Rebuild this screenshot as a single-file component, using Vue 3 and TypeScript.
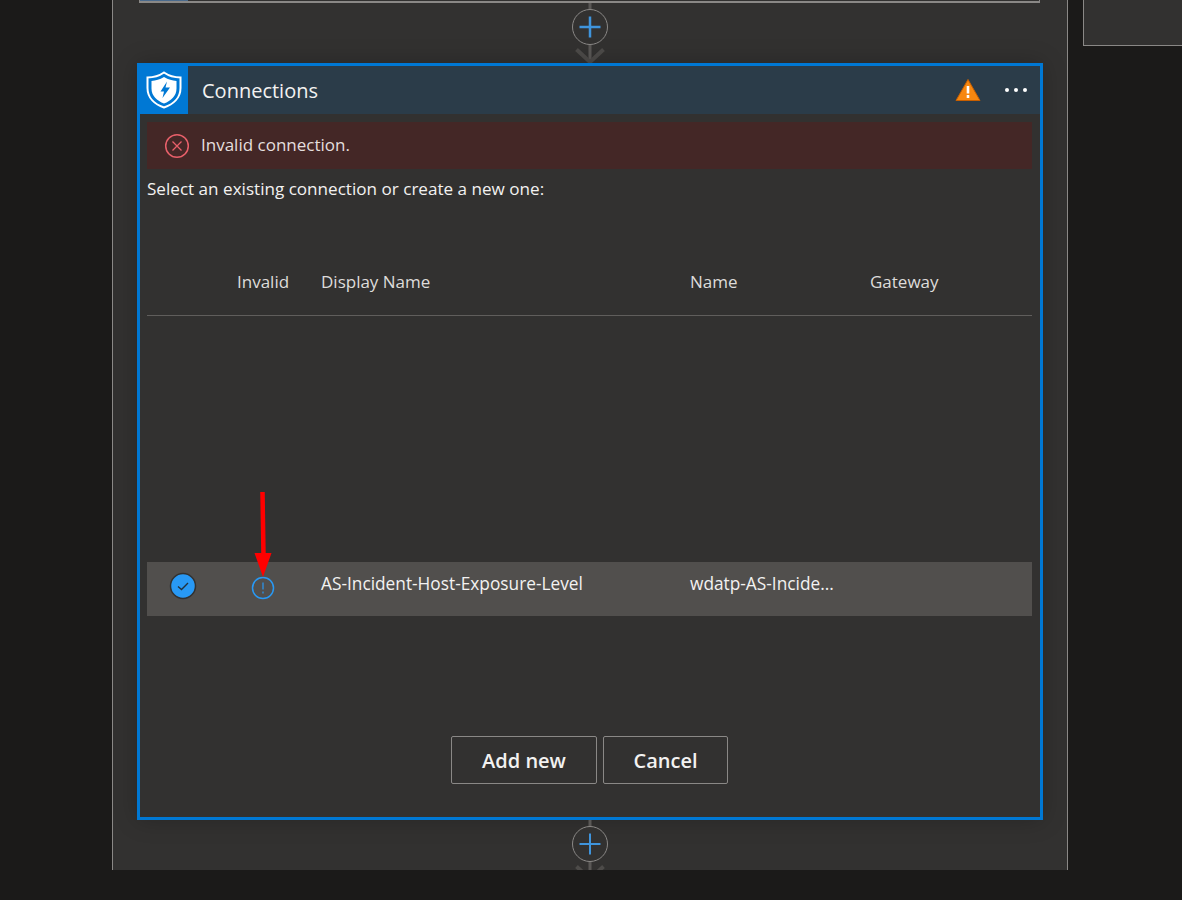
<script setup lang="ts">
interface Column { label: string }
const columns: Column[] = [
  { label: 'Invalid' },
  { label: 'Display Name' },
  { label: 'Name' },
  { label: 'Gateway' },
]
</script>

<template>
  <div class="page">
    <main class="panel">
      <div class="prev-card"><span class="prev-tab"></span></div>
      <div class="connector top">
        <svg class="conn-svg" width="40" height="60" viewBox="0 0 40 60">
          <path d="M20 0V60" stroke="#5a5856" stroke-width="3" fill="none" />
          <path d="M6.500 46.500L20 59L33.500 46.500" stroke="#4d4b49" stroke-width="4" fill="none" />
          <circle cx="20" cy="24" r="17.500" fill="#323130" stroke="#8a8886" stroke-width="1" />
          <path d="M9.500 24H30.500M20 13.500V34.500" stroke="#3f94dc" stroke-width="2.500" fill="none" />
        </svg>
      </div>

      <section class="card">
        <header class="card-head">
          <div class="logo">
            <svg width="36" height="38" viewBox="0 0 36 38">
              <path d="M18 1.500C23 5 28 6.500 34.500 6.500V17C34.500 27 27 33.500 18 36.500C9 33.500 1.500 27 1.500 17V6.500C8 6.500 13 5 18 1.500Z" fill="none" stroke="#fff" stroke-width="2" />
              <path d="M18 6C22.500 8.500 26 9.700 30.500 10V17.500C30.500 25 25 29.800 18 32.500C11 29.800 5.500 25 5.500 17.500V10C10 9.700 13.500 8.500 18 6Z" fill="#fff" />
              <path d="M21 10.500L14.500 20.500H18L16.500 27L24 16.500H19.500L21 10.500Z" fill="#0078d4" />
            </svg>
          </div>
          <h1 class="title">Connections</h1>
          <svg class="warn" width="26" height="24" viewBox="0 0 26 24">
            <path d="M13 1.500L25 22.500H1Z" fill="#f7870f" stroke="#c85f00" stroke-width="1" stroke-linejoin="round" />
            <path d="M11.700 8H14.300V15.500H11.700ZM11.700 17H14.300V20H11.700Z" fill="#fff" />
          </svg>
          <div class="dots"><i></i><i></i><i></i></div>
        </header>

        <div class="body">
          <div class="error">
            <svg width="26" height="26" viewBox="0 0 26 26">
              <circle cx="13" cy="13" r="11.300" fill="none" stroke="#e8606a" stroke-width="1.500" />
              <path d="M8.500 8.500L17.500 17.500M17.500 8.500L8.500 17.500" stroke="#e8606a" stroke-width="1.300" />
            </svg>
            <span>Invalid connection.</span>
          </div>
          <p class="hint">Select an existing connection or create a new one:</p>

          <div class="table-head grid">
            <span></span>
            <span v-for="c in columns" :key="c.label">{{ c.label }}</span>
          </div>

          <div class="rows">
            <div class="row grid">
              <span class="cell-check">
                <svg width="28" height="28" viewBox="0 0 28 28">
                  <circle cx="14" cy="14" r="12.500" fill="#2899f5" stroke="#323130" stroke-width="1.500" />
                  <path d="M9 14.500L12.500 17.500L19 11" fill="none" stroke="#22303c" stroke-width="1.400" />
                </svg>
              </span>
              <span class="cell-invalid">
                <svg width="24" height="24" viewBox="0 0 24 24">
                  <circle cx="12" cy="12" r="10.500" fill="none" stroke="#2899f5" stroke-width="1.500" />
                  <path d="M12 6.500V13.500M12 15.500V17.500" stroke="#2899f5" stroke-width="1.200" fill="none" />
                </svg>
              </span>
              <span>AS-Incident-Host-Exposure-Level</span>
              <span>wdatp-AS-Incide...</span>
              <span></span>
            </div>
            <svg class="annot" width="20" height="86" viewBox="0 0 20 86">
              <path d="M9.500 0L10.500 64" stroke="#f00" stroke-width="4.500" fill="none" />
              <path d="M1.500 61H18.500L10 85Z" fill="#f00" />
            </svg>
          </div>

          <div class="actions">
            <button class="btn add">Add new</button>
            <button class="btn cancel">Cancel</button>
          </div>
        </div>
      </section>

      <div class="connector bottom">
        <svg class="conn-svg" width="40" height="60" viewBox="0 0 40 60">
          <path d="M20 0V60" stroke="#5a5856" stroke-width="3" fill="none" />
          <path d="M6.500 46.500L20 59L33.500 46.500" stroke="#4d4b49" stroke-width="4" fill="none" />
          <circle cx="20" cy="24" r="17.500" fill="#323130" stroke="#8a8886" stroke-width="1" />
          <path d="M9.500 24H30.500M20 13.500V34.500" stroke="#3f94dc" stroke-width="2" fill="none" />
        </svg>
      </div>
    </main>
    <aside class="side-box"></aside>
  </div>
</template>

<style>
html, body { background: #1b1a19; }
</style>

<style scoped>
.page {
  display: flex;
  align-items: flex-start;
  height: 900px;
  overflow: hidden;
  padding-left: 112px;
  background: #1b1a19;
  font-family: "Open Sans", "Noto Sans", "Liberation Sans", sans-serif;
  color: #f3f2f1;
}
.panel {
  width: 956px;
  height: 870px;
  box-sizing: border-box;
  flex: none;
  background: #323130;
  border-left: 1px solid #8a8886;
  border-right: 1px solid #8a8886;
  display: flex;
  flex-direction: column;
  align-items: center;
  overflow: hidden;
}
.prev-card {
  width: 901px;
  height: 3px;
  flex: none;
  box-sizing: border-box;
  margin-right: 1px;
  border: 1px solid #8a8886;
  border-top: 0;
  border-bottom-width: 2px;
  position: relative;
}
.prev-tab {
  display: block;
  width: 48px;
  height: 1px;
  background: #4a6a8c;
}
.connector {
  width: 40px;
  flex: none;
  overflow: hidden;
}
.connector.top { height: 60px; }
.connector.bottom { height: 50px; }
.conn-svg { display: block; }
.card {
  width: 906px;
  height: 757px;
  flex: none;
  box-sizing: border-box;
  border: 3px solid #0078d4;
  background: #323130;
  box-shadow: 0 0 22px rgba(0, 0, 0, 0.22);
  display: flex;
  flex-direction: column;
}
.card-head {
  height: 48px;
  flex: none;
  background: #2b3c49;
  display: flex;
  align-items: center;
}
.logo {
  width: 48px;
  height: 48px;
  background: #0078d4;
  display: flex;
  align-items: center;
  justify-content: center;
}
.title {
  flex: 1;
  margin: 0 0 0 14px;
  font-size: 20px;
  font-weight: 400;
  color: #f3f2f1;
}
.warn { margin-right: 24px; }
.dots {
  display: flex;
  gap: 5px;
  margin-right: 13px;
}
.dots i {
  width: 4px;
  height: 4px;
  border-radius: 50%;
  background: #fff;
}
.body {
  flex: 1;
  display: flex;
  flex-direction: column;
  padding: 8px 8px 0 7px;
}
.error {
  height: 47px;
  flex: none;
  background: #442726;
  display: flex;
  align-items: center;
  gap: 11px;
  padding-left: 17px;
  font-size: 17px;
  color: #e4dfde;
}
.error span { position: relative; top: -1px; }
.hint {
  margin: 9px 0 0;
  font-size: 17.100px;
  line-height: 22px;
  color: #f3f2f1;
}
.grid {
  display: grid;
  grid-template-columns: 90px 84px 369px 180px 1fr;
  align-items: center;
  font-size: 17px;
}
.table-head {
  margin-top: 49px;
  height: 67px;
  box-sizing: border-box;
  border-bottom: 1px solid #605e5c;
  color: #dedcda;
}
.table-head span { position: relative; top: -1px; }
.rows {
  position: relative;
  height: 300px;
  flex: none;
}
.row {
  position: absolute;
  left: 0;
  right: 0;
  top: 246px;
  height: 54px;
  background: #514f4d;
  color: #f3f2f1;
  font-size: 17.300px;
}
.row > span:nth-child(n + 3) { position: relative; top: -6px; }
.cell-check { display: flex; justify-content: center; padding-right: 18px; position: relative; top: -3px; }
.cell-invalid { display: flex; padding-left: 14px; position: relative; top: -1px; }
.annot {
  position: absolute;
  left: 106px;
  top: 176px;
}
.actions {
  margin-top: 120px;
  display: flex;
  gap: 6px;
  justify-content: center;
  margin-right: 120px;
  padding-left: 120px;
}
.btn {
  height: 48px;
  box-sizing: border-box;
  background: transparent;
  border: 1px solid #8a8886;
  border-radius: 2px;
  color: #f3f2f1;
  font: 600 20px "Open Sans", "Noto Sans", sans-serif;
  padding: 0;
}
.add { width: 146px; }
.cancel { width: 125px; }
.side-box {
  width: 99px;
  height: 46px;
  flex: none;
  margin-left: 15px;
  box-sizing: border-box;
  background: #323130;
  border-left: 1px solid #8a8886;
  border-bottom: 1px solid #8a8886;
}
</style>
